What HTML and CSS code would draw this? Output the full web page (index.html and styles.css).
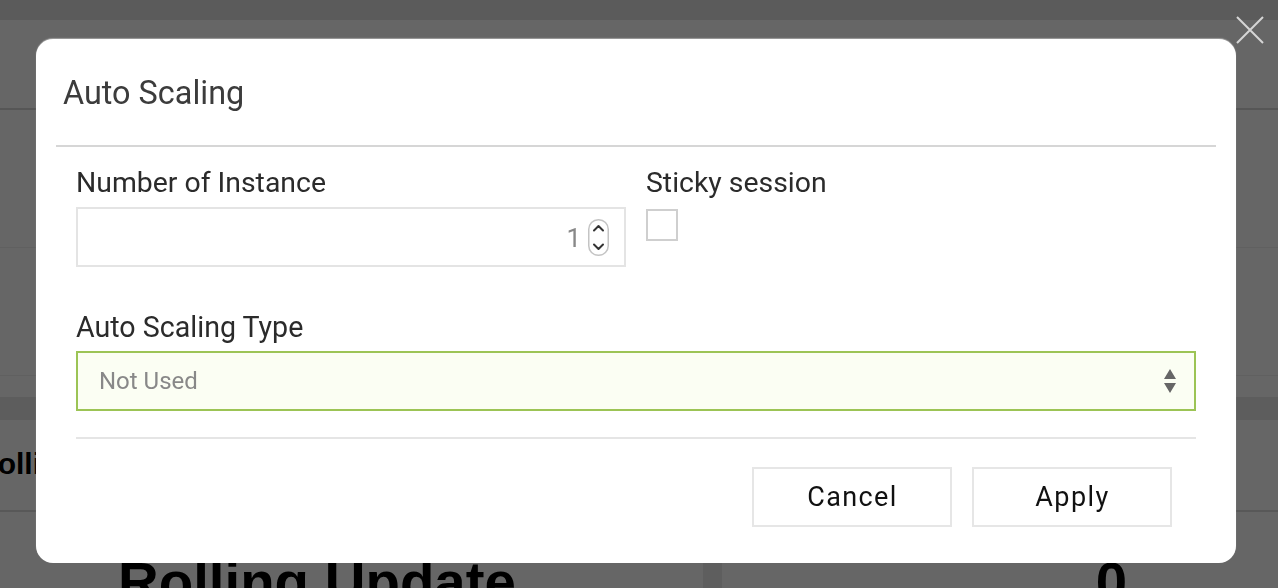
FILE: index.html
```html
<!DOCTYPE html>
<html lang="en">
<head>
<meta charset="utf-8">
<title>Auto Scaling</title>
<link rel="stylesheet" href="styles.css">
</head>
<body>
<div class="page">
  <div class="topbar"></div>
  <div class="header"></div>
  <div class="row row-a"></div>
  <div class="row row-b"></div>
  <div class="spacer"></div>
  <div class="band"></div>
  <div class="row row-c"><span class="row-title">Rolling Update</span></div>
  <div class="summary">
    <div class="card card-left"><span class="big">Rolling Update</span></div>
    <div class="card card-right"><span class="big">0</span></div>
  </div>
</div>

<div class="backdrop"></div>

<button class="close" aria-label="Close">
  <svg width="28" height="28" viewBox="0 0 28 28"><path d="M1 1 L27 27 M27 1 L1 27" stroke="#d6d6d6" stroke-width="2" fill="none"/></svg>
</button>

<div class="modal">
  <div class="modal-header">
    <h2 class="modal-title">Auto Scaling</h2>
  </div>
  <div class="modal-body">
    <div class="form-grid">
      <div class="field">
        <label class="label">Number of Instance</label>
        <div class="number-input">
          <span class="number-value">1</span>
          <svg class="spinner" width="21" height="37" viewBox="0 0 21 37">
            <rect x="0.75" y="0.75" width="19.5" height="35.5" rx="9.5" fill="#fff" stroke="#c4c4c4" stroke-width="1.5"/>
            <path d="M6 11.5 L10.5 7 L15 11.5" stroke="#333" stroke-width="2" fill="none" stroke-linecap="round" stroke-linejoin="round"/>
            <path d="M6 25.5 L10.5 30 L15 25.5" stroke="#333" stroke-width="2" fill="none" stroke-linecap="round" stroke-linejoin="round"/>
          </svg>
        </div>
      </div>
      <div class="field">
        <label class="label">Sticky session</label>
        <span class="checkbox"></span>
      </div>
    </div>
    <div class="field field-wide">
      <label class="label">Auto Scaling Type</label>
      <div class="select">
        <span class="select-value">Not Used</span>
        <svg class="select-arrows" width="12" height="24" viewBox="0 0 12 24">
          <path d="M0 10 L6 0 L12 10 Z M0 14 L12 14 L6 24 Z" fill="#666"/>
        </svg>
      </div>
    </div>
  </div>
  <div class="modal-footer">
    <button class="btn">Cancel</button>
    <button class="btn">Apply</button>
  </div>
</div>
</body>
</html>
```

FILE: styles.css
```css
* { box-sizing: border-box; }

html, body {
  margin: 0;
  padding: 0;
  width: 1278px;
  height: 588px;
  overflow: hidden;
  background: #fff;
  font-family: Roboto, "Noto Sans", sans-serif;
}

/* ---------- underlying page ---------- */
.page {
  display: flex;
  flex-direction: column;
  width: 1278px;
  height: 588px;
  overflow: hidden;
  font-family: "Liberation Sans", Arial, sans-serif;
}
.topbar { height: 20px; background: #e4e4e4; flex: none; }
.header { height: 90px; border-bottom: 2px solid #d6d6d6; flex: none; }
.row { flex: none; }
.row-a { height: 138px; border-bottom: 1px solid #f0f0f0; }
.row-b { height: 128px; border-bottom: 1px solid #f0f0f0; }
.spacer { height: 21px; flex: none; }
.band { height: 23px; background: #e8e8e8; flex: none; }
.row-c {
  height: 92px;
  border-bottom: 2px solid #dcdcdc;
  display: flex;
  align-items: center;
  padding-bottom: 2px;
}
.row-title {
  margin-left: -24px;
  font-size: 30px;
  font-weight: 700;
  color: #000;
  white-space: nowrap;
}
.summary {
  flex: 1;
  display: flex;
  gap: 19px;
  background: #ececec;
}
.card { background: #fff; padding-top: 42px; }
.card-left { width: 703px; padding-left: 118px; }
.card-right { flex: 1; text-align: right; padding-right: 151px; }
.big {
  font-size: 56.4px;
  line-height: 56px;
  font-weight: 700;
  color: #000;
  white-space: nowrap;
}

/* ---------- overlay ---------- */
.backdrop {
  position: fixed;
  inset: 0;
  background: rgba(0, 0, 0, 0.6);
}

.close {
  position: fixed;
  top: 16px;
  left: 1236px;
  width: 28px;
  height: 28px;
  padding: 0;
  border: 0;
  background: none;
  display: block;
}
.close svg { display: block; }

.modal {
  position: fixed;
  top: 39px;
  left: 36px;
  width: 1200px;
  background: #fff;
  border-radius: 17px;
  box-shadow: 0 -1px 1px rgba(255, 255, 255, 0.35);
}

.modal-header {
  margin: 0 20px;
  padding: 36px 7px 34px;
  border-bottom: 2px solid #d6d6d6;
}
.modal-title {
  margin: 0;
  font-size: 32.4px;
  line-height: 36px;
  font-weight: 400;
  color: #3c3c3c;
}

.modal-body {
  padding: 20px 40px 0;
}
.form-grid {
  display: grid;
  grid-template-columns: 550px 550px;
  column-gap: 20px;
}
.field { display: flex; flex-direction: column; align-items: flex-start; }
.field-wide { margin-top: 44px; align-items: stretch; }

.label {
  display: block;
  font-size: 28.4px;
  line-height: 32px;
  color: #2b2b2b;
  margin-bottom: 8px;
}
.field-wide .label { font-size: 28.6px; }

.number-input {
  width: 100%;
  height: 60px;
  border: 2px solid #e4e4e4;
  display: flex;
  align-items: center;
  justify-content: flex-end;
  gap: 7px;
  padding-right: 15px;
}
.number-value {
  font-size: 26px;
  color: #888;
  line-height: 1;
  margin-top: 2px;
}
.spinner { display: block; }

.checkbox {
  display: block;
  width: 32px;
  height: 32px;
  margin-top: 2px;
  border: 2px solid #cfcfcf;
  background: #fff;
}

.select {
  height: 60px;
  border: 2px solid #9cc455;
  background: #fbfef3;
  display: flex;
  align-items: center;
  justify-content: space-between;
  padding: 0 18px 0 21px;
}
.select-value {
  font-size: 24px;
  color: #888;
}
.select-arrows { display: block; }

.modal-footer {
  margin: 26px 40px 0;
  border-top: 2px solid #e5e5e5;
  padding: 28px 24px 36px 0;
  display: flex;
  justify-content: flex-end;
  gap: 20px;
}
.btn {
  width: 200px;
  height: 60px;
  border: 2px solid #e6e6e6;
  background: #fff;
  font-family: Roboto, "Noto Sans", sans-serif;
  font-size: 27px;
  letter-spacing: 1.4px;
  color: #111;
  padding: 0 0 0 1px;
  margin: 0;
}
```
